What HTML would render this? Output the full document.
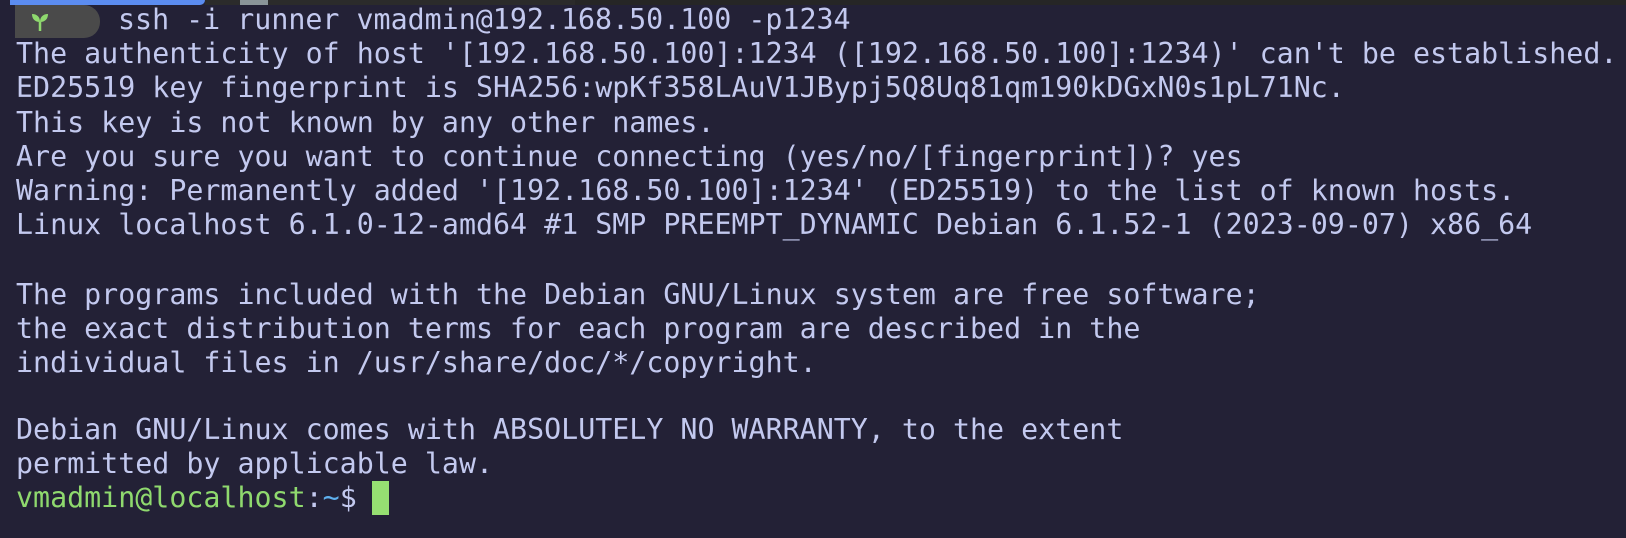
<!DOCTYPE html>
<html><head><style>
html,body{margin:0;padding:0;background:#232136;width:1626px;height:538px;overflow:hidden}
.l{position:absolute;left:16px;height:34px;font-family:"DejaVu Sans Mono","Liberation Mono",monospace;font-size:28.3px;line-height:34px;color:#c3c9ef;white-space:pre}
.g{color:#8fd96e}.b{color:#5fb0ee}
.top1{position:absolute;left:10px;top:0;width:195px;height:5px;background:#5b8cf0;border-radius:0 0 8px 0}
.top2{position:absolute;left:205px;top:0;width:370px;height:5px;background:#2b2b2b}
.top3{position:absolute;left:240px;top:0;width:28px;height:5px;background:#8a9599}
.top4{position:absolute;left:575px;top:0;width:1051px;height:5px;background:#262626}
.pill{position:absolute;left:15px;top:5px;width:85px;height:33px;background:#4a4a4a;border-radius:0 16px 16px 0}
.cur{position:absolute;left:372px;top:481px;width:17px;height:34px;background:#96df72}
</style></head><body>
<div class="top1"></div><div class="top2"></div><div class="top3"></div><div class="top4"></div>
<div class="pill"><svg style="position:absolute;left:14px;top:6px" width="22" height="22" viewBox="0 0 22 22"><path d="M11 20V11" stroke="#8fd96e" stroke-width="2.5" fill="none"/><path d="M11 11C6 11 3 8 3 3C8 3 11 6 11 11Z" fill="#8fd96e"/><path d="M11 11C11 6 14 3 19 3C19 8 16 11 11 11Z" fill="#8fd96e"/></svg></div>
<div class="cur"></div>
<div class="l" style="top:3px;left:118px">ssh -i runner vmadmin@192.168.50.100 -p1234</div>
<div class="l" style="top:37px">The authenticity of host '[192.168.50.100]:1234 ([192.168.50.100]:1234)' can't be established.</div>
<div class="l" style="top:71px">ED25519 key fingerprint is SHA256:wpKf358LAuV1JBypj5Q8Uq81qm190kDGxN0s1pL71Nc.</div>
<div class="l" style="top:106px">This key is not known by any other names.</div>
<div class="l" style="top:140px">Are you sure you want to continue connecting (yes/no/[fingerprint])? yes</div>
<div class="l" style="top:174px">Warning: Permanently added '[192.168.50.100]:1234' (ED25519) to the list of known hosts.</div>
<div class="l" style="top:208px">Linux localhost 6.1.0-12-amd64 #1 SMP PREEMPT_DYNAMIC Debian 6.1.52-1 (2023-09-07) x86_64</div>
<div class="l" style="top:278px">The programs included with the Debian GNU/Linux system are free software;</div>
<div class="l" style="top:312px">the exact distribution terms for each program are described in the</div>
<div class="l" style="top:346px">individual files in /usr/share/doc/*/copyright.</div>
<div class="l" style="top:413px">Debian GNU/Linux comes with ABSOLUTELY NO WARRANTY, to the extent</div>
<div class="l" style="top:447px">permitted by applicable law.</div>
<div class="l" style="top:481px"><span class="g">vmadmin@localhost</span>:<span class="b">~</span>$ </div>
</body></html>
